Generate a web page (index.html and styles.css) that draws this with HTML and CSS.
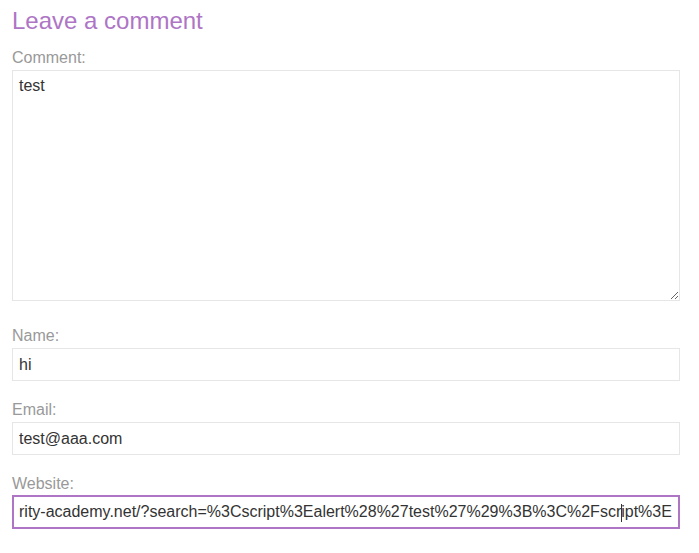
FILE: index.html
```html
<!DOCTYPE html>
<html lang="en">
<head>
<meta charset="utf-8">
<title>Leave a comment</title>
<link rel="stylesheet" href="styles.css">
</head>
<body>
<section class="comment-form">
  <h1 class="heading">Leave a comment</h1>
  <form class="form">
    <label class="label" for="comment">Comment:</label>
    <textarea class="field textarea" id="comment" rows="12">test</textarea>
    <label class="label" for="name">Name:</label>
    <input class="field input" id="name" type="text" value="hi">
    <label class="label" for="email">Email:</label>
    <input class="field input" id="email" type="text" value="test@aaa.com">
    <label class="label" for="website">Website:</label>
    <div class="caret-wrap">
      <input class="field input focused" id="website" type="text" value="rity-academy.net/?search=%3Cscript%3Ealert%28%27test%27%29%3B%3C%2Fscript%3E">
      <span class="caret"></span>
    </div>
  </form>
</section>
</body>
</html>
```

FILE: styles.css
```css
html, body {
  margin: 0;
  padding: 0;
  background: #fff;
}
body {
  font-family: "Liberation Sans", Arial, sans-serif;
}
.comment-form {
  width: 668px;
  padding: 6px 12px 0;
}
.heading {
  margin: 0;
  font-size: 24px;
  line-height: 29px;
  font-weight: normal;
  color: #ae75c5;
}
.form {
  display: flex;
  flex-direction: column;
  margin-top: 13px;
}
.label {
  display: block;
  font-size: 16px;
  line-height: 19px;
  color: #999;
  margin-bottom: 3px;
}
.field {
  box-sizing: border-box;
  width: 668px;
  margin: 0;
  font-family: "Liberation Sans", Arial, sans-serif;
  font-size: 16px;
  color: #333;
  background: #fff;
  border: 1px solid #e6e6e6;
  border-radius: 0;
  outline: none;
}
.textarea {
  display: block;
  height: 231px;
  padding: 6px 6px 4px;
  line-height: 18.4px;
  margin-bottom: 25px;
  resize: both;
}
.input {
  display: block;
  height: 33px;
  padding: 0 6px;
  margin-bottom: 19px;
}
.caret-wrap {
  position: relative;
  width: 668px;
}
.focused {
  border: 2px solid #ae75c5;
  padding: 0 5px;
  height: 34px;
  margin-top: -1px;
}
.caret {
  position: absolute;
  left: 609px;
  top: 8px;
  width: 1px;
  height: 18px;
  background: #333;
}
```
